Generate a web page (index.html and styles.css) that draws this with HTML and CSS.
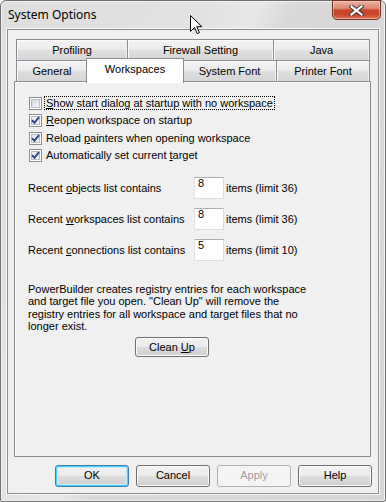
FILE: index.html
```html
<!DOCTYPE html>
<html>
<head>
<meta charset="utf-8">
<link rel="stylesheet" href="styles.css">
</head>
<body>
<div class="window">
  <div class="titlebar">
    <span class="title">System Options</span>
    <div class="close">
      <svg width="15" height="11" viewBox="0 0 15 11">
        <path d="M2.5 1.5 L12.5 9.5 M12.5 1.5 L2.5 9.5" stroke="#4d3b38" stroke-width="4.2" stroke-linecap="square" fill="none"/>
        <path d="M2.5 1.5 L12.5 9.5 M12.5 1.5 L2.5 9.5" stroke="#ffffff" stroke-width="2.2" stroke-linecap="square" fill="none"/>
      </svg>
    </div>
  </div>
  <div class="client">
    <div class="tabs">
      <div class="tabrow">
        <div class="tab t-prof">Profiling</div>
        <div class="tab t-fire">Firewall Setting</div>
        <div class="tab t-java">Java</div>
      </div>
      <div class="tabrow">
        <div class="tab t-gen">General</div>
        <div class="tab t-ws sel">Workspaces</div>
        <div class="tab t-sys">System Font</div>
        <div class="tab t-prn">Printer Font</div>
      </div>
      <div class="panel">
        <div class="checks">
          <div class="check">
            <span class="cb"></span>
            <span class="lbl focus"><u>S</u>how start dialog at startup with no workspace</span>
          </div>
          <div class="check">
            <span class="cb on"><svg width="9" height="9" viewBox="0 0 9 9"><path d="M1 4.2 L3.4 6.8 L8 1.2" stroke="#2a3f86" stroke-width="1.9" fill="none"/></svg></span>
            <span class="lbl"><u>R</u>eopen workspace on startup</span>
          </div>
          <div class="check">
            <span class="cb on"><svg width="9" height="9" viewBox="0 0 9 9"><path d="M1 4.2 L3.4 6.8 L8 1.2" stroke="#2a3f86" stroke-width="1.9" fill="none"/></svg></span>
            <span class="lbl">Reload <u>p</u>ainters when opening workspace</span>
          </div>
          <div class="check">
            <span class="cb on"><svg width="9" height="9" viewBox="0 0 9 9"><path d="M1 4.2 L3.4 6.8 L8 1.2" stroke="#2a3f86" stroke-width="1.9" fill="none"/></svg></span>
            <span class="lbl">Automatically set current <u>t</u>arget</span>
          </div>
        </div>
        <div class="counts">
          <span class="clabel">Recent <u>o</u>bjects list contains</span>
          <span class="tbox">8</span>
          <span class="limit">items (limit 36)</span>
          <span class="clabel">Recent <u>w</u>orkspaces list contains</span>
          <span class="tbox">8</span>
          <span class="limit">items (limit 36)</span>
          <span class="clabel">Recent <u>c</u>onnections list contains</span>
          <span class="tbox">5</span>
          <span class="limit">items (limit 10)</span>
        </div>
        <p class="info">PowerBuilder creates registry entries for each workspace and target file you open. "Clean Up" will remove the registry entries for all workspace and target files that no longer exist.</p>
        <div class="btn cleanup">Clean <u>U</u>p</div>
      </div>
    </div>
    <div class="buttons">
      <div class="btn def">OK</div>
      <div class="btn">Cancel</div>
      <div class="btn dis">Apply</div>
      <div class="btn">Help</div>
    </div>
  </div>
  <svg class="cursor" width="13" height="20" viewBox="0 0 13 20">
    <path d="M0.5 0.5 L0.5 16.5 L4.5 12.5 L7.2 18.6 L9.4 17.7 L6.8 11.7 L11.9 11.7 Z" fill="#ffffff" stroke="#000000" stroke-width="1"/>
  </svg>
</div>
</body>
</html>
```
FILE: styles.css
```css
html, body {
  margin: 0;
  padding: 0;
  background: #ffffff;
}
body {
  width: 386px;
  height: 502px;
  overflow: hidden;
  font-family: "Liberation Sans", Arial, sans-serif;
  font-size: 11px;
  color: #000;
}
.window {
  position: relative;
  box-sizing: border-box;
  width: 386px;
  height: 502px;
  border: 1px solid #6f6f6f;
  border-radius: 6px 6px 2px 2px;
  background: linear-gradient(112deg, #dedede 0%, #e2e2e2 35%, #e9e9e9 44%, #d9d9d9 50%, #d6d6d6 100%);
  box-shadow: inset 0 0 0 1px #f2f2f2;
}
.titlebar {
  height: 28px;
  display: flex;
  justify-content: space-between;
  align-items: flex-start;
  padding: 0 4px 0 7px;
}
.title {
  font-family: "Noto Sans", "Open Sans", sans-serif;
  font-size: 12px;
  line-height: 14px;
  margin-top: 7px;
  color: #000;
}
.close {
  box-sizing: border-box;
  width: 49px;
  height: 20px;
  margin-top: -1px;
  border: 1px solid #6c3025;
  border-radius: 0 0 5px 5px;
  background: linear-gradient(#eab2a3 0%, #de8a73 40%, #c84428 52%, #c9492b 78%, #dd7a58 100%);
  box-shadow: inset 0 0 0 1px rgba(255, 220, 210, 0.5);
  display: flex;
  align-items: center;
  justify-content: center;
}
.client {
  box-sizing: border-box;
  height: 465px;
  margin: 0 6px;
  border: 1px solid #8f8f8f;
  background: #f0f0f0;
  box-shadow: 0 0 0 1px #f6f6f6;
  display: flex;
  flex-direction: column;
}
.tabs {
  padding: 9px 0 0 6px;
}
.tabrow {
  display: flex;
  margin-left: 2px;
  height: 21px;
  position: relative;
}
.tab {
  box-sizing: border-box;
  height: 21px;
  margin-left: -1px;
  border: 1px solid #898c95;
  border-bottom: none;
  background: linear-gradient(#f3f3f3 0%, #ececec 45%, #dedede 55%, #d6d6d6 100%);
  box-shadow: inset 1px 1px 0 #fbfbfb, inset -1px 0 0 #f4f4f4;
  text-align: center;
  line-height: 20px;
  white-space: nowrap;
}
.t-prof { width: 112px; margin-left: 0; }
.t-fire { width: 147px; }
.t-java { width: 97px; }
.t-gen { width: 72px; margin-left: 0; }
.t-sys { width: 95px; margin-left: -2px; }
.t-prn { width: 94px; }
.tab.sel {
  width: 98px;
  height: 25px;
  margin-left: -2px;
  margin-top: -2px;
  background: #ffffff;
  box-shadow: none;
  position: relative;
  z-index: 2;
  line-height: 20px;
}
.panel {
  box-sizing: border-box;
  width: 357px;
  height: 376px;
  border: 1px solid #898c95;
  background: #f0f0f0;
  box-shadow: inset 1px 1px 0 #fbfbfb;
  padding: 15px 0 0 13px;
  position: relative;
  z-index: 1;
}
.checks {
  display: flex;
  flex-direction: column;
  padding-left: 1px;
}
.check {
  display: flex;
  align-items: flex-start;
  height: 17.3px;
}
.cb {
  box-sizing: border-box;
  width: 13px;
  height: 13px;
  border: 1px solid #8e8f8f;
  background: #f4f4f4;
  box-shadow: inset 0 0 0 1px #ffffff, inset 0 0 0 2px #b9bdc3;
  position: relative;
  display: flex;
  align-items: center;
  justify-content: center;
}
.cb::before {
  content: "";
  position: absolute;
  left: 2px;
  top: 2px;
  width: 7px;
  height: 7px;
  background: linear-gradient(135deg, #cfd2d6 0%, #e6e7e9 50%, #f8f8f8 100%);
}
.cb.on::before {
  background: linear-gradient(135deg, #e9ecef 0%, #f4f5f6 100%);
}
.cb svg {
  position: relative;
  z-index: 1;
}
.lbl {
  margin-left: 2px;
  padding: 0 1px;
  line-height: 12px;
  border: 1px dotted transparent;
  margin-top: -1px;
}
.lbl.focus {
  border-color: #000;
}
.counts {
  display: grid;
  grid-template-columns: 164px 30px auto;
  grid-auto-rows: 22px;
  row-gap: 9px;
  column-gap: 2px;
  margin-top: 11px;
  align-items: center;
}
.tbox {
  box-sizing: border-box;
  height: 22px;
  border: 1px solid #dadde2;
  border-top-color: #abadb3;
  border-left-color: #e2e3ea;
  background: #ffffff;
  padding: 0 0 0 3px;
  line-height: 11px;
}
.info {
  margin: 22px 0 0;
  width: 290px;
  line-height: 12.3px;
}
.btn {
  box-sizing: border-box;
  width: 74px;
  height: 22px;
  border: 1px solid #707070;
  border-radius: 3px;
  background: linear-gradient(#f2f2f2 0%, #ebebeb 48%, #dddddd 52%, #cfcfcf 100%);
  box-shadow: inset 0 0 0 1px #fbfbfb;
  text-align: center;
  line-height: 19px;
}
.cleanup {
  width: 74px;
  height: 20px;
  line-height: 18px;
  margin: 5px 0 0 107px;
}
.buttons {
  display: flex;
  justify-content: flex-end;
  gap: 7px;
  padding: 8px 6px 0 0;
}
.btn.def {
  border-color: #3c7fb1;
  box-shadow: inset 0 0 0 1px #48d2f8, inset 0 0 0 2px #c7ecfb;
}
.btn.dis {
  border-color: #adb2b5;
  background: #f4f4f4;
  box-shadow: none;
  color: #a0a0a0;
}
.cursor {
  position: absolute;
  left: 189px;
  top: 14px;
}
```
